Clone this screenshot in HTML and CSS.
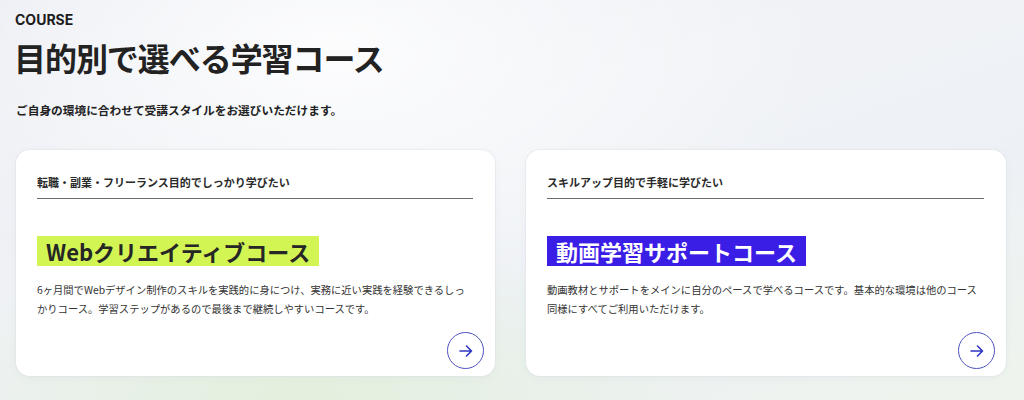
FILE: index.html
```html
<!DOCTYPE html>
<html lang="ja">
<head>
<meta charset="utf-8">
<title>COURSE</title>
<link rel="stylesheet" href="styles.css">
</head>
<body>
<section class="course">
  <p class="eyebrow">COURSE</p>
  <h1 class="title">目的別で選べる学習コース</h1>
  <p class="lead">ご自身の環境に合わせて受講スタイルをお選びいただけます。</p>
  <div class="cards">
    <article class="card">
      <p class="card-target">転職・副業・フリーランス目的でしっかり学びたい</p>
      <h2 class="card-name"><span class="tag tag-lime">Webクリエイティブコース</span></h2>
      <p class="card-desc">6ヶ月間でWebデザイン制作のスキルを実践的に身につけ、実務に近い実践を経験できるしっかりコース。学習ステップがあるので最後まで継続しやすいコースです。</p>
      <div class="card-foot">
        <a class="more" href="#" aria-label="詳しく見る">
          <svg width="14" height="12" viewBox="0 0 14 12" fill="none" stroke="currentColor" stroke-width="1.6" stroke-linecap="round" stroke-linejoin="round"><path d="M1 6h11.5M7.5 1l5 5-5 5"/></svg>
        </a>
      </div>
    </article>
    <article class="card">
      <p class="card-target">スキルアップ目的で手軽に学びたい</p>
      <h2 class="card-name"><span class="tag tag-blue">動画学習サポートコース</span></h2>
      <p class="card-desc">動画教材とサポートをメインに自分のペースで学べるコースです。基本的な環境は他のコース同様にすべてご利用いただけます。</p>
      <div class="card-foot">
        <a class="more" href="#" aria-label="詳しく見る">
          <svg width="14" height="12" viewBox="0 0 14 12" fill="none" stroke="currentColor" stroke-width="1.6" stroke-linecap="round" stroke-linejoin="round"><path d="M1 6h11.5M7.5 1l5 5-5 5"/></svg>
        </a>
      </div>
    </article>
  </div>
</section>
</body>
</html>
```
FILE: styles.css
```css
* { box-sizing: border-box; }
html, body { margin: 0; padding: 0; }
body {
  width: 1024px;
  height: 400px;
  overflow: hidden;
  font-family: "Noto Sans CJK JP", "Noto Sans", sans-serif;
  color: #222;
  background:
    radial-gradient(ellipse 420px 160px at 300px 400px, rgba(226, 240, 218, 0.9), rgba(226, 240, 218, 0) 100%),
    radial-gradient(ellipse 500px 260px at 330px 50px, rgba(255, 255, 255, 0.85), rgba(255, 255, 255, 0) 100%),
    linear-gradient(160deg, #e9ebf2 0%, #f0f2f6 40%, #edf1f5 70%, #eef4ec 100%);
}
.course {
  padding: 10px 18px 0 16px;
}
.eyebrow {
  margin: 0;
  font-family: Inter, "Noto Sans", sans-serif;
  font-weight: 700;
  font-size: 14px;
  line-height: 20px;
  color: #1c1c1c;
  margin-left: -1px;
}
.title {
  margin: 7px 0 0 -2px;
  font-size: 32px;
  line-height: 40px;
  font-weight: 700;
  letter-spacing: -1.05px;
  color: #222;
}
.lead {
  margin: 24px 0 0;
  font-size: 11.7px;
  line-height: 18px;
  font-weight: 700;
  color: #222;
}
.cards {
  margin-top: 31px;
  display: grid;
  grid-template-columns: 479px 480px;
  column-gap: 31px;
}
.card {
  background: #fff;
  border-radius: 14px;
  box-shadow: 0 0 0 1px rgba(220, 224, 230, 0.45), 0 2px 8px rgba(120, 130, 150, 0.06);
  padding: 24px 22px 7px 21px;
  height: 226px;
  display: flex;
  flex-direction: column;
}
.card-target {
  margin: 0;
  font-size: 11px;
  line-height: 16px;
  font-weight: 700;
  color: #2a2a2a;
  padding-bottom: 8px;
  border-bottom: 1px solid #6b6b6b;
}
.card-name {
  margin: 37px 0 0;
  line-height: 30px;
  font-size: 22px;
  font-weight: 700;
}
.tag {
  display: inline-block;
  height: 30px;
  padding: 0 9px;
  line-height: 30px;
}
.tag-lime {
  background: #d3f553;
  color: #262626;
}
.tag-blue {
  background: #3b1ee6;
  color: #fff;
}
.card-desc {
  margin: 14px 0 0;
  font-size: 10.3px;
  line-height: 19px;
  color: #333;
}
.card-foot {
  margin-top: auto;
  margin-right: -11px;
  display: flex;
  justify-content: flex-end;
}
.more {
  width: 37px;
  height: 37px;
  border-radius: 50%;
  border: 1px solid #4d53bd;
  color: #2f36c4;
  display: flex;
  align-items: center;
  justify-content: center;
}
```
